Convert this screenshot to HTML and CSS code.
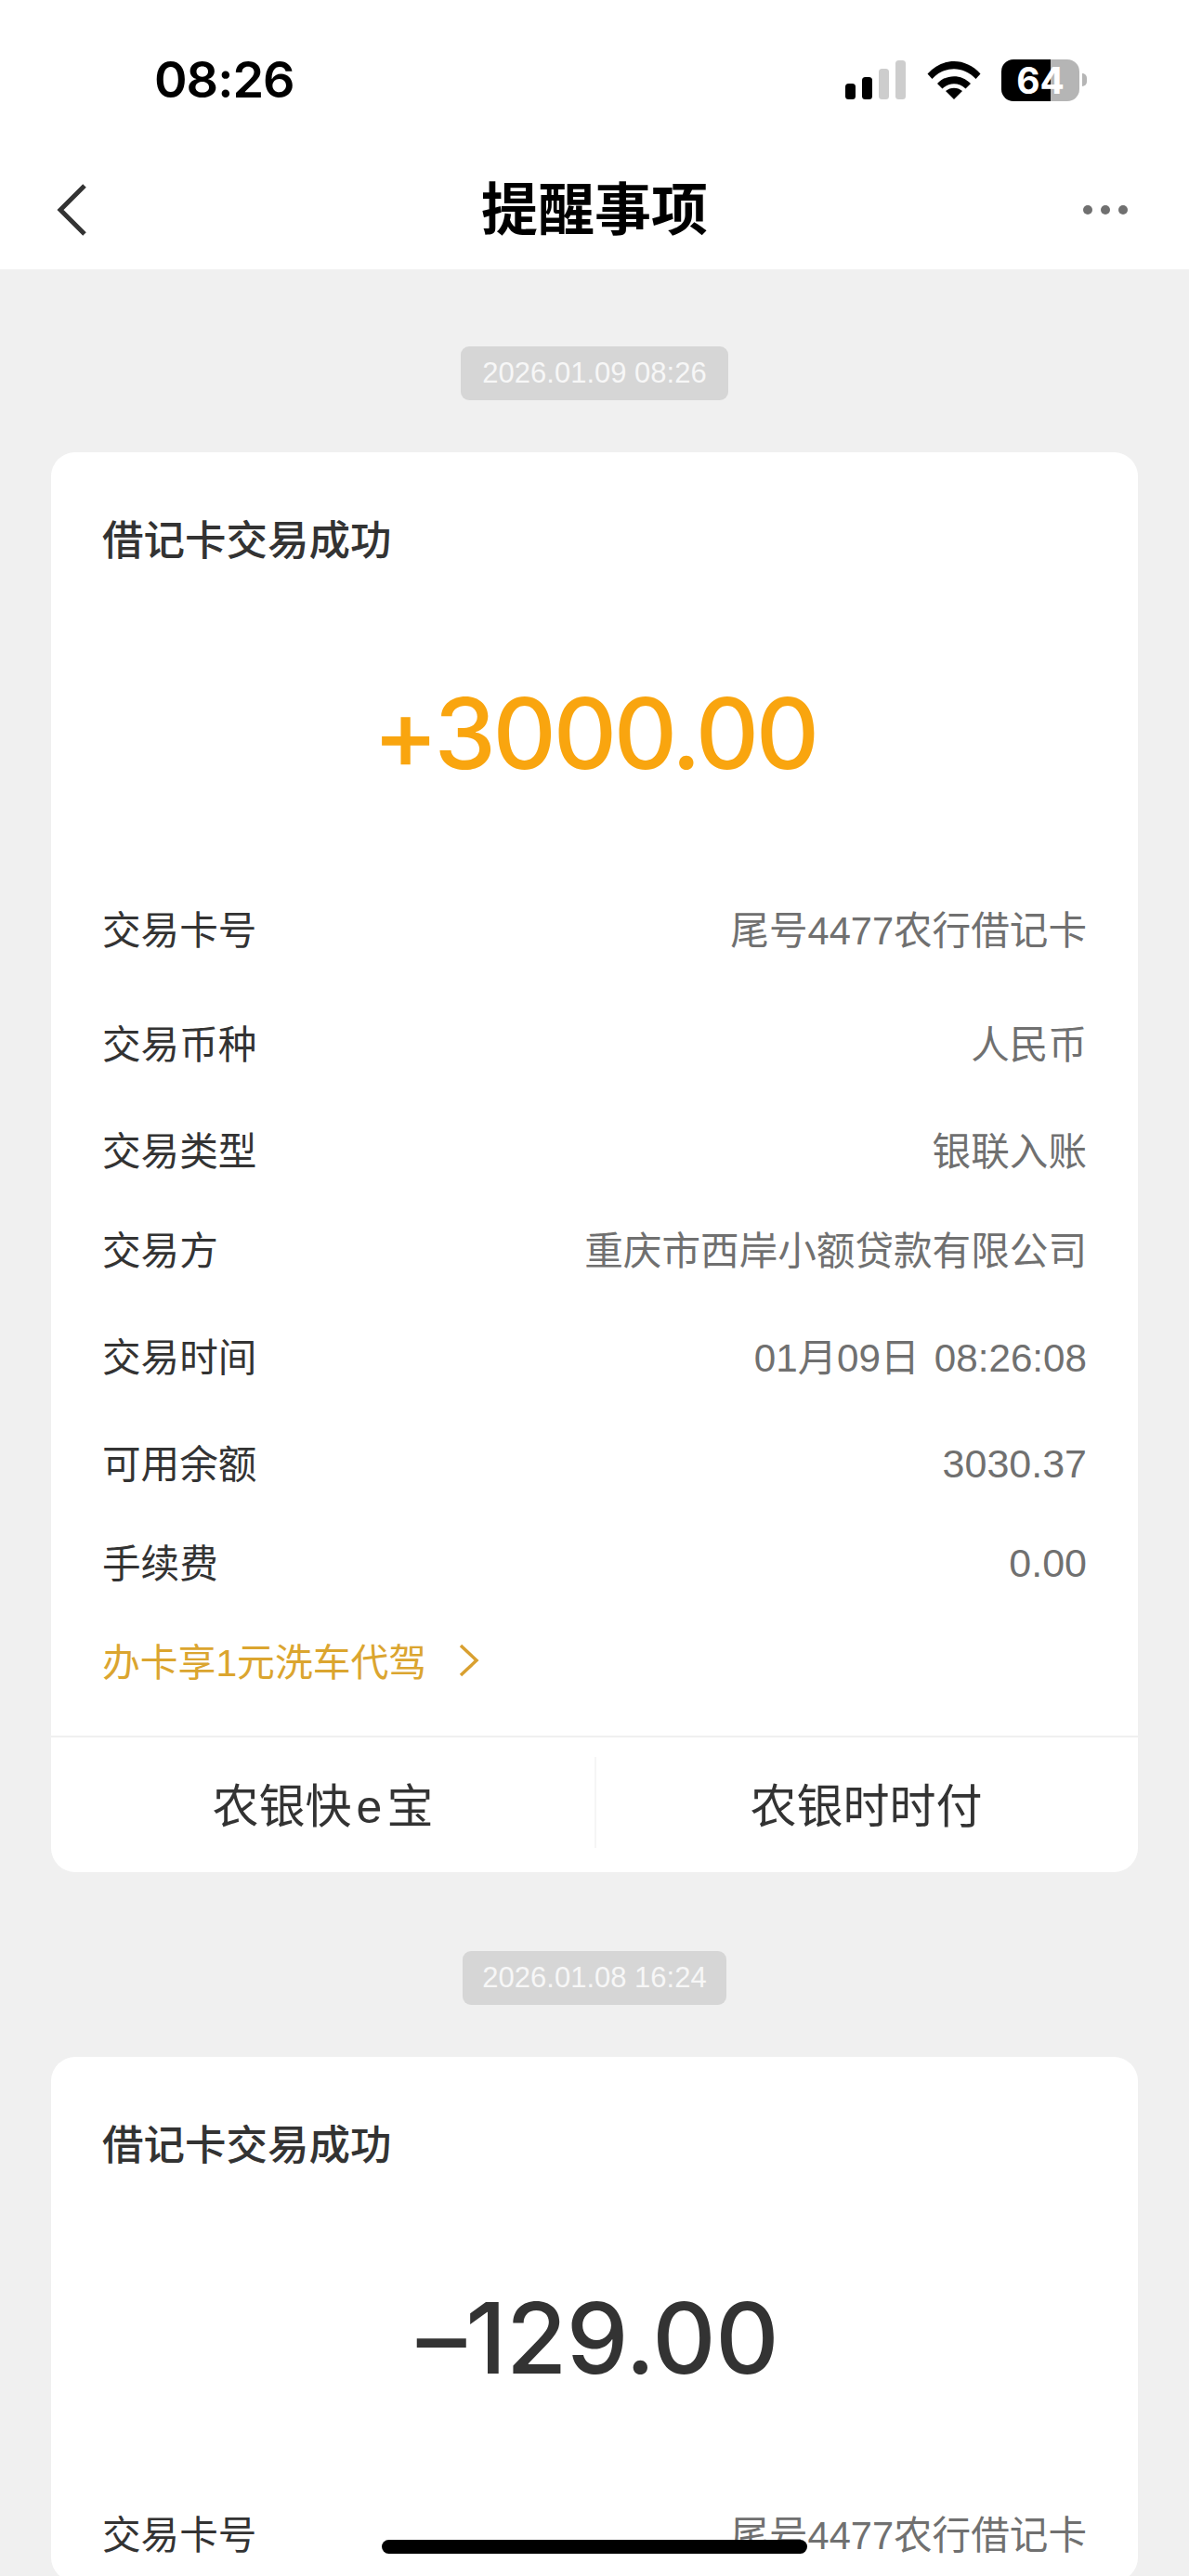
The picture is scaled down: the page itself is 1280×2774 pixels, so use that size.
FILE: index.html
```html
<!DOCTYPE html>
<html lang="zh-CN">
<head>
<meta charset="utf-8">
<title>提醒事项</title>
<link rel="stylesheet" href="styles.css">
</head>
<body>
<div class="page">
  <header class="top">
    <div class="status">
      <span class="time">08:26</span>
      <div class="status-icons">
        <svg class="signal" width="66" height="42" viewBox="0 0 66 42"><rect class="on" x="0" y="25" width="11" height="17" rx="3.5"/><rect class="on" x="18" y="18" width="11" height="24" rx="3.5"/><rect class="off" x="36" y="9" width="11" height="33" rx="3.5"/><rect class="off" x="54" y="0" width="11" height="42" rx="3.5"/></svg>
        <svg class="wifi" width="58" height="42" viewBox="0 0 58 42"><path d="M0.5 14.5C16.5 -3.5 41.5 -3.5 57.5 14.5L52.5 20C39 5.5 19 5.5 5.5 20Z"/><path d="M11 25C21 14.5 37 14.5 47 25L41.5 30.5C34.5 23.5 23.5 23.5 16.5 30.5Z"/><path d="M20 33C25 28.5 33 28.5 38 33L29 42Z"/></svg>
        <div class="battery"><div class="battery-body"><span class="battery-text">64</span></div><span class="battery-nub"></span></div>
      </div>
    </div>
    <nav class="nav">
      <svg class="back" width="32" height="56" viewBox="0 0 32 56"><path d="M30 2L4 28L30 54"/></svg>
      <h1 class="nav-title">提醒事项</h1>
      <div class="more"><i></i><i></i><i></i></div>
    </nav>
  </header>
  <main class="feed">
    <div class="stamp">2026.01.09 08:26</div>
    <section class="card">
      <h2 class="card-title">借记卡交易成功</h2>
      <div class="amount amount-in">+3000.00</div>
      <div class="rows">
        <div class="row"><span class="label">交易卡号</span><span class="value">尾号4477农行借记卡</span></div>
        <div class="row gap-l"><span class="label">交易币种</span><span class="value">人民币</span></div>
        <div class="row gap-m"><span class="label">交易类型</span><span class="value">银联入账</span></div>
        <div class="row"><span class="label">交易方</span><span class="value">重庆市西岸小额贷款有限公司</span></div>
        <div class="row gap-m"><span class="label">交易时间</span><span class="value value-date">01月09日 08:26:08</span></div>
        <div class="row gap-m"><span class="label">可用余额</span><span class="value value-num">3030.37</span></div>
        <div class="row"><span class="label">手续费</span><span class="value value-num">0.00</span></div>
        <div class="row promo"><span>办卡享1元洗车代驾</span><svg class="promo-arrow" width="22" height="36" viewBox="0 0 22 36"><path d="M2 2L19 18L2 34"/></svg></div>
      </div>
      <div class="actions">
        <div class="action">农银快<span class="action-e">e</span>宝</div>
        <div class="action action-split">农银时时付</div>
      </div>
    </section>
    <div class="stamp stamp-next">2026.01.08 16:24</div>
    <section class="card">
      <h2 class="card-title">借记卡交易成功</h2>
      <div class="amount amount-out">–129.00</div>
      <div class="rows">
        <div class="row"><span class="label">交易卡号</span><span class="value">尾号4477农行借记卡</span></div>
      </div>
    </section>
  </main>
  <div class="home-bar"></div>
</div>
</body>
</html>
```
FILE: styles.css
```css
* { box-sizing: border-box; }
html, body { margin: 0; padding: 0; height: 2774px; overflow: hidden; }
body {
  background: #f0f0f0;
  font-family: "Liberation Sans", "Noto Sans CJK SC", sans-serif;
  color: #333;
}
.page { position: relative; height: 2774px; overflow: hidden; }

.top { background: #fff; height: 290px; }
.status {
  height: 162px;
  padding: 10px 110px 0 166px;
  display: flex;
  align-items: center;
  justify-content: space-between;
}
.time { font-family: Inter, "Liberation Sans", sans-serif; font-size: 54px; font-weight: 600; letter-spacing: -1px; color: #000; line-height: 1; }
.status-icons { display: flex; align-items: center; gap: 22px; }
.signal .on { fill: #000; }
.signal .off { fill: #cdcdcd; }
.wifi { fill: #000; }
.battery { display: flex; align-items: center; gap: 3px; }
.battery-body {
  width: 84px;
  height: 45px;
  border-radius: 13px;
  background: linear-gradient(90deg, #000 0 53px, #b5b5b5 53px);
  display: flex;
  align-items: center;
  justify-content: center;
}
.battery-text { font-family: Inter, "Liberation Sans", sans-serif; color: #fff; font-size: 39px; font-weight: 700; line-height: 1; }
.battery-nub { width: 5px; height: 14px; border-radius: 0 5px 5px 0; background: #b5b5b5; }

.nav {
  height: 128px;
  padding: 0 66px;
  display: grid;
  grid-template-columns: 1fr auto 1fr;
  align-items: center;
}
.back { margin-left: -5px; fill: none; stroke: #333; stroke-width: 5; }
.nav-title { margin: 0; padding-top: 2px; font-size: 61px; font-weight: 700; color: #000; line-height: 1; }
.more { display: flex; gap: 9px; width: 48px; justify-self: end; }
.more i { width: 10px; height: 10px; border-radius: 50%; background: #707070; }

.feed { padding-top: 83px; display: flex; flex-direction: column; align-items: center; }
.stamp {
  height: 58px;
  width: 288px;
  border-radius: 9px;
  background: #d6d6d6;
  color: #f7f7f7;
  font-size: 31px;
  line-height: 58px;
  text-align: center;
  white-space: nowrap;
}
.stamp-next { margin-top: 85px; width: 284px; }
.card {
  width: 1170px;
  margin-top: 56px;
  background: #fff;
  border-radius: 26px;
  flex: none;
}
.card-title {
  margin: 0;
  height: 188px;
  padding: 0 0 6px 55px;
  display: flex;
  align-items: center;
  font-size: 44.5px;
  font-weight: 500;
  color: #333;
}
.amount {
  height: 230px;
  display: flex;
  align-items: center;
  justify-content: center;
  font-family: Inter, "Liberation Sans", sans-serif;
  font-size: 106px;
  font-weight: 500;
  color: #333;
  line-height: 1;
}
.amount-in { color: #f9a50f; letter-spacing: -3.4px; }
.amount-out { letter-spacing: -0.4px; padding-left: 7px; }
.rows { padding: 40px 55px 0; }
.row {
  height: 107px;
  display: flex;
  align-items: center;
  justify-content: space-between;
  font-size: 41.6px;
}
.gap-l { margin-top: 16px; }
.gap-m { margin-top: 8px; }
.label { color: #333; }
.value { color: #707070; }
.value-num { font-size: 43px; padding-top: 6px; }
.value-date { font-size: 42.2px; word-spacing: 4px; }
.promo { justify-content: flex-start; gap: 35px; color: #dba52f; font-size: 40.8px; }
.promo-arrow { fill: none; stroke: #d9a030; stroke-width: 3.5; }
.actions {
  margin-top: 28px;
  height: 147px;
  padding-bottom: 5px;
  border-top: 2px solid #f0f0f0;
  display: flex;
  align-items: center;
}
.action { flex: 1; text-align: center; font-size: 50px; color: #333; }
.action-e { margin: 0 5px; }
.action-split { position: relative; }
.action-split::before {
  content: "";
  position: absolute;
  left: 0;
  top: -13px;
  bottom: -13px;
  width: 2px;
  background: #f5f5f5;
}
.home-bar {
  position: absolute;
  left: 411px;
  top: 2735px;
  width: 458px;
  height: 15px;
  border-radius: 8px;
  background: #000;
}
```
